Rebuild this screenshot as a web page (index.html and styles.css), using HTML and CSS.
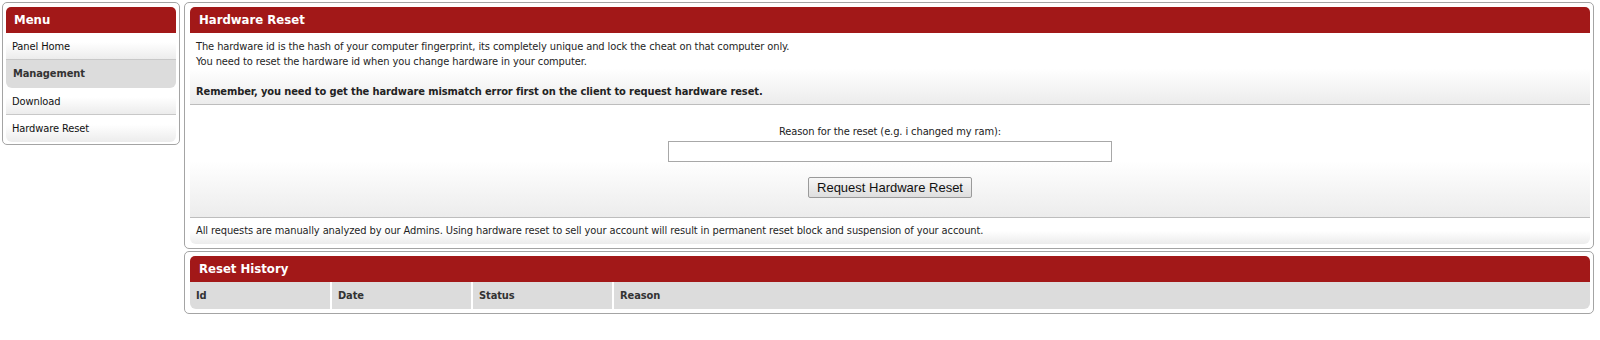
FILE: index.html
```html
<!DOCTYPE html>
<html lang="en">
<head>
  <meta charset="UTF-8">
  <title>Hardware Reset</title>
  <link rel="stylesheet" href="styles.css">
</head>
<body>
<div class="layout">
  <div class="box menu">
    <div class="box-title">Menu</div>
    <a class="menu-item" href="#">Panel Home</a>
    <div class="menu-cat">Management</div>
    <a class="menu-item" href="#">Download</a>
    <a class="menu-item last" href="#">Hardware Reset</a>
  </div>

  <div class="content">
    <div class="box">
      <div class="box-title">Hardware Reset</div>
      <div class="section">
        The hardware id is the hash of your computer fingerprint, its completely unique and lock the cheat on that computer only.<br>
        You need to reset the hardware id when you change hardware in your computer.<br>
        <br>
        <b>Remember, you need to get the hardware mismatch error first on the client to request hardware reset.</b>
      </div>
      <form class="section reset-form" onsubmit="return false;">
        <label for="reason">Reason for the reset (e.g. i changed my ram):</label>
        <input type="text" id="reason" class="reason-input">
        <button type="submit" class="btn">Request Hardware Reset</button>
      </form>
      <div class="section last">
        All requests are manually analyzed by our Admins. Using hardware reset to sell your account will result in permanent reset block and suspension of your account.
      </div>
    </div>

    <div class="box">
      <div class="box-title">Reset History</div>
      <table class="history">
        <thead>
          <tr>
            <th class="col">Id</th>
            <th class="col">Date</th>
            <th class="col">Status</th>
            <th>Reason</th>
          </tr>
        </thead>
      </table>
    </div>
  </div>
</div>
</body>
</html>
```

FILE: styles.css
```css
* { box-sizing: border-box; }

html, body {
  margin: 0;
  background: #fff;
  font-family: 'DejaVu Sans Condensed', 'DejaVu Sans', sans-serif;
  font-size: 11px;
  letter-spacing: -0.1px;
  color: #1e1e1e;
}

body {
  padding: 2px 6px 2px 2px;
}

.layout {
  display: flex;
  align-items: flex-start;
  gap: 4px;
}

.box {
  border: 1px solid #a4a4a4;
  border-radius: 5px;
  padding: 4px 3px 4px 4px;
  background: #fff;
}

.menu {
  width: 178px;
  padding-left: 3px;
  padding-bottom: 2px;
}

.content {
  flex: 1;
  display: flex;
  flex-direction: column;
  gap: 2px;
}

.content .box {
  padding-left: 5px;
}

.box-title {
  background: #a21818;
  color: #fff;
  font-weight: bold;
  font-size: 13px;
  letter-spacing: 0;
  height: 26px;
  line-height: 26px;
  padding-left: 9px;
  border-radius: 5px 5px 0 0;
}

.menu .box-title {
  padding-left: 8px;
}

.menu-item {
  display: block;
  height: 27px;
  line-height: 28px;
  padding-left: 6px;
  color: #111;
  text-decoration: none;
  background: linear-gradient(#fff 35%, #ececec);
  border-bottom: 1px solid #c8c8c8;
}

.menu-item.last {
  border-bottom: none;
  border-radius: 0 0 6px 6px;
}

.menu-cat {
  height: 28px;
  line-height: 28px;
  padding-left: 7px;
  font-weight: bold;
  color: #333;
  background: #dcdcdc;
  border-radius: 0 0 6px 6px;
}

.section {
  padding: 6px 6px 5px 6px;
  line-height: 15px;
  background: linear-gradient(#fff 50%, #ececec);
  border-bottom: 1px solid #bdbdbd;
}

.section b {
  color: #222;
}

.section.last {
  border-bottom: none;
  border-radius: 0 0 6px 6px;
  padding: 5px 6px 6px 6px;
}

.reset-form {
  display: flex;
  flex-direction: column;
  align-items: center;
  padding: 19px 6px 19px 6px;
}

.reset-form label {
  line-height: 15px;
  margin-bottom: 2px;
  color: #222;
}

.reason-input {
  width: 444px;
  height: 21px;
  border: 1px solid #a8a8a8;
  margin: 0 0 15px 0;
  font: inherit;
}

.btn {
  height: 21px;
  padding: 0 8px;
  font-family: 'Liberation Sans', Arial, sans-serif;
  font-size: 13px;
  letter-spacing: 0;
  color: #111;
  border: 1px solid #9a9a9a;
  border-radius: 2px;
  background: linear-gradient(#f7f7f7, #dedede);
}

.history {
  width: 100%;
  border-collapse: collapse;
}

.history th {
  background: #dcdcdc;
  color: #333;
  text-align: left;
  font-weight: bold;
  height: 27px;
  padding: 0 6px;
  border-left: 2px solid #fff;
}

.history th:first-child {
  border-left: none;
  border-bottom-left-radius: 6px;
}

.history th:last-child {
  border-bottom-right-radius: 6px;
}

.history .col {
  width: 141px;
}
```
